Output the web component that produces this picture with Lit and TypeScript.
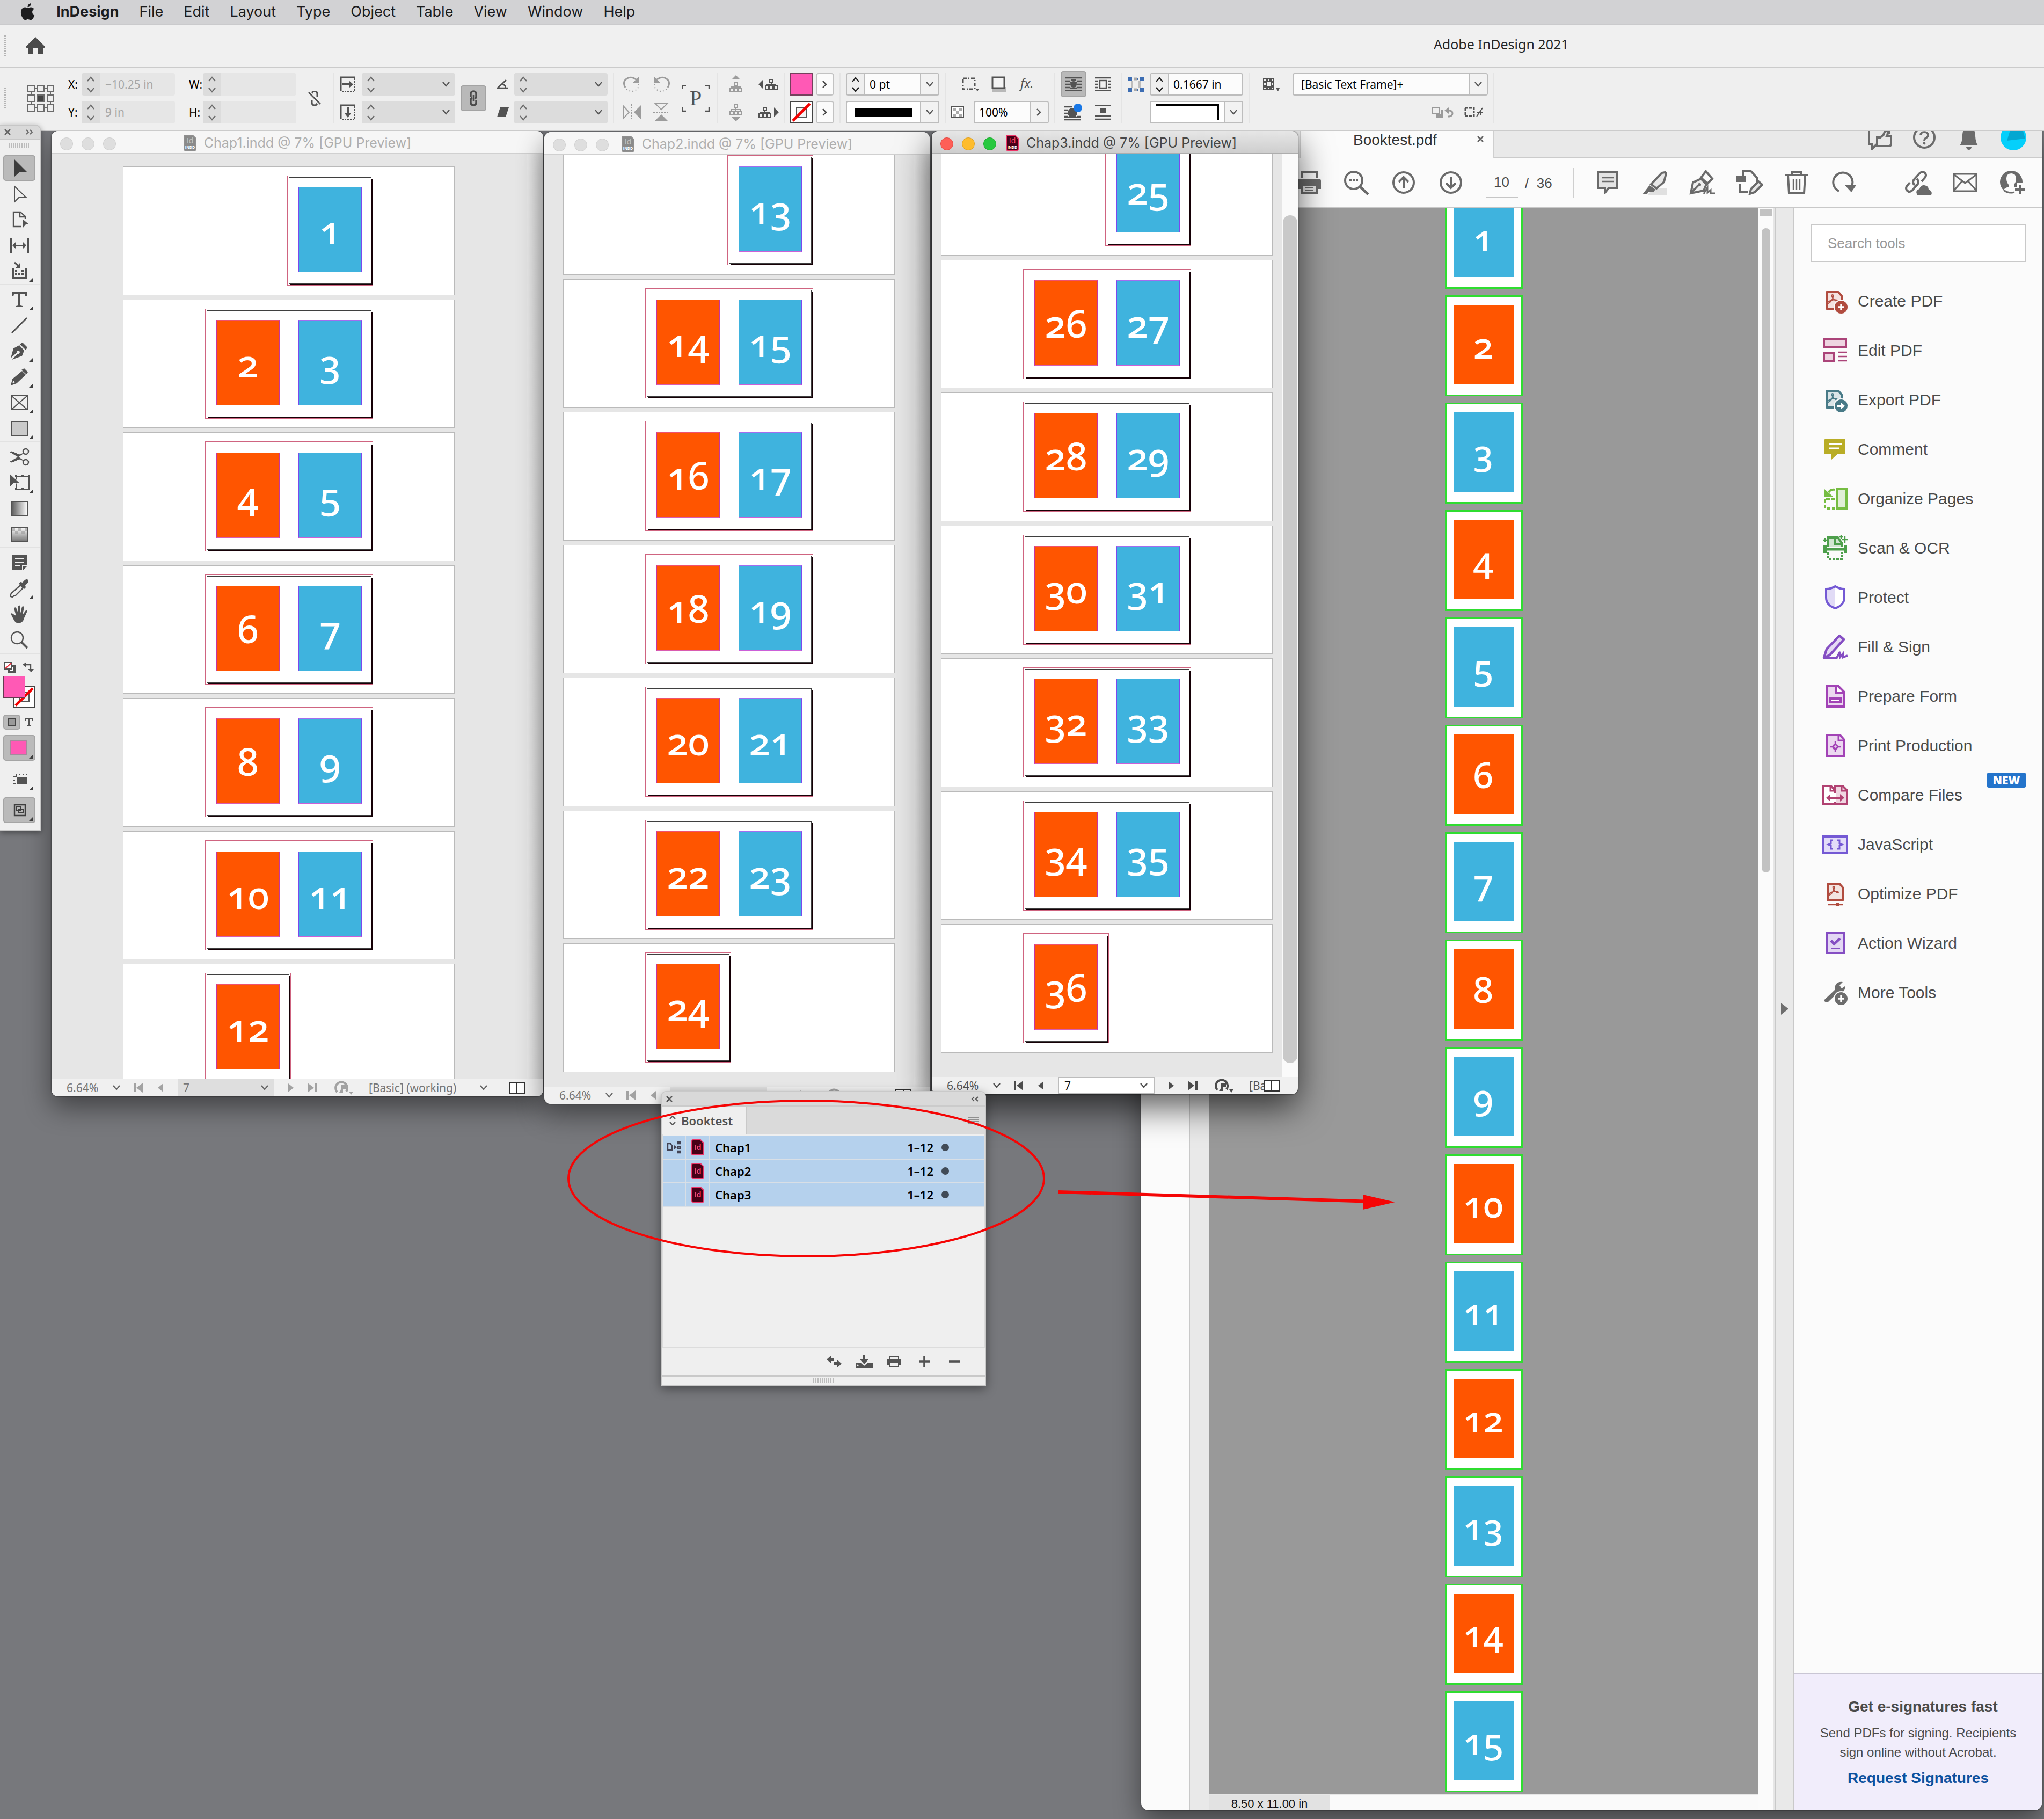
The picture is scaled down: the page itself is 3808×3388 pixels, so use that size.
import { LitElement, html, svg, css, nothing, SVGTemplateResult } from "lit";
import { customElement, property } from "lit/decorators.js";
import { classMap } from "lit/directives/class-map.js";
import { styleMap } from "lit/directives/style-map.js";

type Icon = [number, number, SVGTemplateResult];

const corner = svg`<path d="M56 34v8h-8z" fill="#3f3f3f"/>`;
const acrobatMark = (c: string) => svg`<path d="M19 12c3 0 1 6-1 9-2 4-6 8-8 7-1-2 4-5 8-6s10-1 10 1-5 0-8-4-3-7-1-7z" fill="none" stroke=${c} stroke-width="2"/>`;
const pdfPage = (c: string, f: string) => svg`
  <path d="M8 7h22l6 7v24H8z" fill=${f} stroke=${c} stroke-width="4" stroke-linejoin="round"/>${acrobatMark(c)}`;
const node = (x: number, y: number) => svg`<rect x=${x} y=${y} width="6" height="6" fill="none" stroke="currentColor" stroke-width="2"/>`;
const tree = (x: number, y: number) => svg`<g transform="translate(${x} ${y})">${node(9, 1)}${node(1, 13)}${node(9, 13)}${node(17, 13)}<path d="M12 7v6M4 13v-3h16v3" fill="none" stroke="currentColor" stroke-width="2"/></g>`;

const ICONS: Record<string, Icon> = {
  apple: [24, 24, svg`<path fill="currentColor" d="M12.152 6.896c-.948 0-2.415-1.078-3.96-1.04-2.04.027-3.91 1.183-4.961 3.014-2.117 3.675-.546 9.103 1.519 12.09 1.013 1.454 2.208 3.09 3.792 3.039 1.52-.065 2.09-.987 3.935-.987 1.831 0 2.35.987 3.96.948 1.637-.026 2.676-1.48 3.676-2.948 1.156-1.688 1.636-3.325 1.662-3.415-.039-.013-3.182-1.221-3.22-4.857-.026-3.04 2.48-4.494 2.597-4.559-1.429-2.09-3.623-2.324-4.39-2.376-2-.156-3.675 1.09-4.61 1.09zM15.53 3.83c.843-1.012 1.4-2.427 1.245-3.83-1.207.052-2.662.805-3.532 1.818-.78.896-1.454 2.338-1.273 3.714 1.338.104 2.715-.688 3.559-1.701"/>`],
  home: [36, 32, svg`<path fill="currentColor" d="M18 0l18 18-2 3h-2v11H22V20h-8v12H4V21H2l-2-3z"/>`],
  chevDown: [14, 10, svg`<path d="M1 1l6 7 6-7" fill="none" stroke="currentColor" stroke-width="2.4"/>`],
  chevUp: [14, 10, svg`<path d="M1 9l6-7 6 7" fill="none" stroke="currentColor" stroke-width="2.4"/>`],
  chevRight: [10, 14, svg`<path d="M1 1l6 6-6 6" fill="none" stroke="currentColor" stroke-width="2.4"/>`],
  refPoint: [50, 50, svg`<g fill="none" stroke="#6b6b6b" stroke-width="2">
    ${[1, 19, 37].map((y) => [1, 19, 37].map((x) => svg`<rect x=${x} y=${y} width="12" height="12" fill=${x === 19 && y === 19 ? "#444" : "none"}/>`))}
    <path d="M13 7h6M31 7h6M13 43h6M31 43h6M7 13v6M7 31v6M43 13v6M43 31v6"/></g>`],
  unlink: [26, 28, svg`<g fill="none" stroke="currentColor" stroke-width="3"><path d="M8 11V6q0-5 5-5t5 5v5M8 17v5q0 5 5 5t5-5v-5"/><path d="M2 3l22 22" stroke="#efefef" stroke-width="7"/><path d="M2 3l22 22" stroke-width="2.6"/></g>`],
  chain: [16, 30, svg`<g fill="none" stroke="#4a4a4a" stroke-width="3.4"><path d="M3 12V7q0-5 5-5t5 5v5q0 3-3 4M13 18v5q0 5-5 5t-5-5v-5q0-3 3-4"/><path d="M8 9v12" stroke-width="2.6"/></g>`],
  scaleX: [30, 30, svg`<path d="M28 2H2v26" fill="none" stroke="currentColor" stroke-width="3"/><path d="M28 4v25M4 28h24" fill="none" stroke="currentColor" stroke-width="2" stroke-dasharray="3 2"/><path d="M5 13h12V8l8 7-8 7v-5H5z" fill="currentColor"/>`],
  scaleY: [30, 30, svg`<path d="M28 2H2v26" fill="none" stroke="currentColor" stroke-width="3"/><path d="M28 4v25M4 28h24" fill="none" stroke="currentColor" stroke-width="2" stroke-dasharray="3 2"/><path d="M13 5h4v12h4l-6 8-6-8h4z" fill="currentColor"/>`],
  angle: [24, 18, svg`<path d="M18 1L2 16h20M11 8q6 3 6 8" fill="none" stroke="currentColor" stroke-width="2.6"/>`],
  shear: [24, 18, svg`<path d="M7 0h16l-6 18H1z" fill="currentColor"/>`],
  rotCw: [34, 32, svg`<path d="M5 22Q-1 12 7 6t18 1" fill="none" stroke="currentColor" stroke-width="3"/><path d="M31 1v13H18z" fill="currentColor"/><path d="M7 25q9 8 20 0 3-4 3-9" fill="none" stroke="currentColor" stroke-width="2" stroke-dasharray="2 4"/>`],
  rotCcw: [34, 32, svg`<g transform="matrix(-1 0 0 1 34 0)"><path d="M5 22Q-1 12 7 6t18 1" fill="none" stroke="currentColor" stroke-width="3"/><path d="M31 1v13H18z" fill="currentColor"/><path d="M7 25q9 8 20 0 3-4 3-9" fill="none" stroke="currentColor" stroke-width="2" stroke-dasharray="2 4"/></g>`],
  flipH: [34, 32, svg`<path d="M1 4v24l11-12z" fill="none" stroke="currentColor" stroke-width="2"/><path d="M34 3v26L21 16z" fill="currentColor"/><path d="M17 1v30" stroke="currentColor" stroke-width="2" stroke-dasharray="3 2"/>`],
  flipV: [32, 34, svg`<path d="M5 1h22L16 12z" fill="none" stroke="currentColor" stroke-width="2"/><path d="M3 34h26L16 21z" fill="currentColor"/><path d="M1 17h30" stroke="currentColor" stroke-width="2" stroke-dasharray="3 2"/>`],
  bracketP: [52, 50, svg`<path d="M1 8V1h7M44 1h7v7M51 42v7h-7M8 49H1v-7" fill="none" stroke="currentColor" stroke-width="2.4"/><text x="26" y="38" text-anchor="middle" font-family="Liberation Serif, serif" font-size="40" fill="currentColor">P</text>`],
  treeUp: [26, 34, svg`<path d="M13 0l8 8H5z" fill="currentColor"/>${tree(1, 12)}`],
  treeDown: [26, 34, svg`<path d="M13 34l8-8H5z" fill="currentColor"/>${tree(1, 2)}`],
  treeLeft: [38, 22, svg`<path d="M0 11l9-9v18z" fill="currentColor"/>${tree(12, 1)}`],
  treeRight: [38, 22, svg`<path d="M38 11l-9-9v18z" fill="currentColor"/>${tree(0, 1)}`],
  noneSwatch: [42, 42, svg`<rect x="1" y="1" width="40" height="40" fill="#fff" stroke="#444" stroke-width="2"/><rect x="12" y="12" width="18" height="18" fill="#f4f4f4" stroke="#555" stroke-width="2"/><path d="M5 37L37 5" stroke="#f30000" stroke-width="5"/>`],
  cornerOpt: [32, 26, svg`<path d="M2 2h22v20H2z" fill="none" stroke="currentColor" stroke-width="3" stroke-dasharray="7 3 2 3"/><path d="M25 21h7l-3 5z" fill="currentColor"/>`],
  dropShadow: [28, 30, svg`<rect x="2" y="20" width="26" height="10" fill="#b8b8b8"/><rect x="2" y="2" width="22" height="20" fill="#f4f4f4" stroke="currentColor" stroke-width="3"/>`],
  fx: [36, 34, svg`<text x="3" y="24" font-family="Noto Sans, sans-serif" font-style="italic" font-size="23" fill="currentColor">fx.</text>`],
  checker: [24, 22, svg`<rect x="1" y="1" width="22" height="20" fill="#fff" stroke="currentColor" stroke-width="2"/><path d="M3 3h6v5H3zM15 3h6v5h-6zM9 8h6v6H9zM3 14h6v6H3zM15 14h6v6h-6z" fill="#aaa"/>`],
  wrapNone: [30, 26, svg`<path d="M0 1h30M0 7h9M21 7h9M0 13h9M21 13h9M0 19h9M21 19h9M0 25h30M10 5h10M8 10h14M10 15h10M8 20h14" stroke="currentColor" stroke-width="2.6"/><circle cx="15" cy="13" r="6" fill="currentColor"/>`],
  wrapBox: [30, 26, svg`<path d="M0 1h30M0 7h6M24 7h6M0 13h6M24 13h6M0 19h6M24 19h6M0 25h30" stroke="currentColor" stroke-width="2.4"/><rect x="9" y="6" width="12" height="14" fill="none" stroke="currentColor" stroke-width="2.4"/>`],
  wrapShape: [34, 32, svg`<path d="M0 6h14M0 12h7M0 18h7M0 24h7M24 24h6M0 30h30M0 25h30" stroke="currentColor" stroke-width="2.4"/><circle cx="15" cy="17" r="9" fill="currentColor"/><circle cx="25" cy="8" r="8" fill="#1877e6"/>`],
  wrapJump: [30, 28, svg`<path d="M0 1h30M0 21h30M0 27h30" stroke="currentColor" stroke-width="2.4"/><path d="M9 6h12v10H9z" fill="currentColor"/>`],
  offset: [30, 28, svg`<path d="M0 0h8v8H0zM22 0h8v8h-8zM0 20h8v8H0zM22 20h8v8h-8z" fill="#3c6db3"/><path d="M11 4h8M11 24h8" stroke="#3c6db3" stroke-width="4"/><path d="M8 8v12M22 8v12" stroke="#bdbdbd" stroke-width="4"/><path d="M12 4h6M12 24h6" stroke="#a9a9a9" stroke-width="5"/>`],
  frame: [32, 26, svg`<path d="M2 2h5v5H2zM9 2h5v5H9zM16 2h5v5h-5zM2 10h5v5H2zM16 10h5v5h-5zM2 18h5v5H2zM9 18h5v5H9zM16 18h5v5h-5z" fill="none" stroke="currentColor" stroke-width="2"/><path d="M25 20h7l-3 6z" fill="currentColor"/>`],
  clearOver: [40, 20, svg`<path d="M1 1h13v12H1z" fill="none" stroke="#9a9a9a" stroke-width="2"/><path d="M9 14h7V5h5v15H7v-6" fill="#9a9a9a"/><path d="M27 7h5q6 0 6 5t-6 6h-3" fill="none" stroke="#9a9a9a" stroke-width="3"/><path d="M31 1v12l-8-6z" fill="#9a9a9a"/>`],
  breakLink: [36, 20, svg`<rect x="2" y="2" width="16" height="15" fill="none" stroke="currentColor" stroke-width="3" stroke-dasharray="5 2"/><path d="M34 2L23 18M23 10h12M30 5v10" stroke="currentColor" stroke-width="2"/>`],

  close: [12, 12, svg`<path d="M1 1l10 10M11 1L1 11" stroke="currentColor" stroke-width="2.6"/>`],
  dblRight: [14, 10, svg`<path d="M1 1l4 4-4 4M8 1l4 4-4 4" fill="none" stroke="currentColor" stroke-width="2"/>`],
  dblLeft: [14, 10, svg`<path d="M6 1L2 5l4 4M13 1L9 5l4 4" fill="none" stroke="currentColor" stroke-width="2"/>`],
  tSelect: [60, 44, svg`<path d="M20 5l24 24H31l-11 10z" fill="#3c3c3c"/>`],
  tDirect: [60, 44, svg`<path d="M21 8l21 20H30l-9 9z" fill="none" stroke="currentColor" stroke-width="2"/>`],
  tPage: [60, 44, svg`<path d="M41 20v-4l-9-8H19v27h15" fill="none" stroke="currentColor" stroke-width="2.4"/><path d="M31 8v9h10" fill="none" stroke="currentColor" stroke-width="2.4"/><path d="M36 21l12 10h-6l-6 7z" fill="currentColor"/>`],
  tGap: [60, 44, svg`<path d="M12 8h4v28h-4zM44 8h4v28h-4z" fill="currentColor"/><path d="M22 22h16" stroke="currentColor" stroke-width="2"/><path d="M17 22l7-7v14zM43 22l-7-7v14z" fill="currentColor"/>`],
  tContent: [60, 44, svg`<path d="M18 16v18h24V16" fill="none" stroke="currentColor" stroke-width="4"/><path d="M22 20h4v4h-4zM34 20h4v4h-4zM22 26h4v4h-4zM28 26h4v4h-4zM34 26h4v4h-4z" fill="currentColor"/><path d="M21 6l7 6" stroke="currentColor" stroke-width="3"/><path d="M32 6v10H23z" fill="currentColor"/>${corner}`],
  tType: [60, 44, svg`<path d="M16 8h28v8h-3l-1-4h-8v21l4 1v2H24v-2l4-1V12h-8l-1 4h-3z" fill="currentColor"/>${corner}`],
  tLine: [60, 44, svg`<path d="M16 36L44 8" stroke="currentColor" stroke-width="3"/>`],
  tPen: [60, 44, svg`<path d="M30 11l9 10-4 10-19 7 11-11a3 3 0 1 0-2-2L14 35l5-18z" fill="currentColor"/><path d="M31 9l5-3 9 9-3 5z" fill="currentColor"/>${corner}`],
  tPencil: [60, 44, svg`<path d="M14 38l3-12 18-15 7 7-17 16zm3-4l5-2-3-3z" fill="currentColor" fill-rule="evenodd"/><path d="M34 9l5-3 7 7-3 4z" fill="currentColor"/>${corner}`],
  tFrame: [60, 44, svg`<path d="M15 9h30v26H15zM15 9l30 26M45 9L15 35" fill="none" stroke="currentColor" stroke-width="2"/>${corner}`],
  tRect: [60, 44, svg`<path d="M15 9h30v26H15z" fill="#cacaca" stroke="currentColor" stroke-width="2"/>${corner}`],
  tScissors: [60, 44, svg`<g fill="none" stroke="currentColor" stroke-width="2.4"><circle cx="42" cy="12" r="5"/><circle cx="42" cy="32" r="5"/></g><path d="M38 15L28 22 13 13l3-1 14 6zM38 29l-10-7-15 9 3 1 14-6z" fill="currentColor" stroke="currentColor"/>`],
  tTransform: [60, 44, svg`<path d="M24 10h24v24H24z" fill="none" stroke="currentColor" stroke-width="2"/><path d="M22 8h4v4h-4zM34 8h4v4h-4zM46 8h4v4h-4zM46 20h4v4h-4zM34 32h4v4h-4zM22 32h4v4h-4zM46 32h4v4h-4z" fill="currentColor"/><path d="M12 5l19 18H20l-8 8z" fill="currentColor" stroke="#efefef" stroke-width="1"/>${corner}`],
  tGradient: [60, 44, svg`<defs><linearGradient id="g"><stop offset="0" stop-color="#555"/><stop offset="1" stop-color="#fff"/></linearGradient></defs><path d="M15 9h30v26H15z" fill="url(#g)" stroke="currentColor" stroke-width="2"/>`],
  tFeather: [60, 44, svg`<defs><linearGradient id="h" x2="0" y2="1"><stop offset="0" stop-color="#fff"/><stop offset="1" stop-color="#777"/></linearGradient></defs><path d="M15 9h30v26H15z" fill="url(#h)" stroke="currentColor" stroke-width="2"/><path d="M16 10h6v6h-6zM28 10h6v6h-6zM40 10h4v6h-4zM22 16h6v6h-6zM34 16h6v6h-6z" fill="#999" opacity=".6"/>`],
  tNote: [60, 44, svg`<path d="M16 8h28v19h-9v9H16z" fill="currentColor"/><path d="M22 15h16M22 21h16M22 27h9" stroke="#efefef" stroke-width="2"/><path d="M37 29h7l-7 7z" fill="currentColor"/>`],
  tDropper: [60, 44, svg`<path d="M32 16l5 5-14 14q-3 0-6 3l-3-1q-1-3 1-6z" fill="none" stroke="currentColor" stroke-width="2.4"/><path d="M29 13l3-3 4 1q7-9 10-5t-5 10l1 4-3 3z" fill="currentColor"/>${corner}`],
  tHand: [60, 44, svg`<path d="M14 21q2-2 5 1l5 3-4-14q2-3 4-1l4 10V7q2-3 4 0v13l3-12q3-2 4 1l-3 14 6-8q3-1 3 1l-6 13q-2 8-7 9h-7q-3-1-6-7z" fill="currentColor"/>`],
  tZoom: [60, 44, svg`<circle cx="26" cy="18" r="11" fill="none" stroke="currentColor" stroke-width="2.4"/><path d="M34 26l11 11" stroke="currentColor" stroke-width="4"/>`],
  defaults: [22, 20, svg`<rect x="8" y="8" width="11" height="10" fill="#fff" stroke="currentColor" stroke-width="4"/><rect x="1" y="1" width="13" height="12" fill="#fff" stroke="currentColor" stroke-width="2"/><path d="M2 12L13 2" stroke="#e23" stroke-width="2"/>`],
  swap: [22, 20, svg`<path d="M6 5h9v9" fill="none" stroke="currentColor" stroke-width="2.4"/><path d="M7 0v10L0 5zM10 13h11l-5 6z" fill="currentColor"/>`],
  fillBox: [16, 16, svg`<rect x="1" y="1" width="14" height="14" fill="#999" stroke="#444" stroke-width="2"/>`],
  smallT: [16, 16, svg`<path d="M0 0h16v5h-2V2h-4v12h2v2H4v-2h2V2H2v3H0z" fill="currentColor"/>`],
  pinkFill: [60, 44, svg`<rect x="14" y="9" width="30" height="26" fill="#ff59b5" stroke="#a58a9c" stroke-width="2"/>${corner}`],
  viewMode: [60, 44, svg`<path d="M26 18h18v13H26z" fill="currentColor"/><path d="M18 17h7v-6M31 11v3M37 11v3M43 11v3M18 24h4M18 30h6" fill="none" stroke="currentColor" stroke-width="2"/>${corner}`],
  screenMode: [60, 44, svg`<path d="M21 12h20v20H21z" fill="none" stroke="#3f3f3f" stroke-width="2.4"/><path d="M24 16h9v7h-9zM28 21h9v6h-9z" fill="none" stroke="#3f3f3f" stroke-width="2"/>${corner}`],

  first: [18, 18, svg`<path d="M0 1h4v16H0zM17 0v18L5 9z" fill="currentColor"/>`],
  prev: [10, 16, svg`<path d="M10 0v16L0 8z" fill="currentColor"/>`],
  next: [10, 16, svg`<path d="M0 0v16l10-8z" fill="currentColor"/>`],
  last: [18, 18, svg`<path d="M14 1h4v16h-4zM0 0v18l12-9z" fill="currentColor"/>`],
  preflight: [36, 26, svg`<path d="M5 21A11 11 0 1 1 22 20" fill="none" stroke="currentColor" stroke-width="4"/><path d="M12 8h9v8h-5v7H8q3-3 4-7z" fill="currentColor"/><path d="M27 20h8l-4 6z" fill="currentColor"/>`],
  columns: [30, 22, svg`<path d="M1 1h28v20H1zM15 1v20" fill="#fff" stroke="#333" stroke-width="2"/>`],
  stack: [26, 24, svg`<g fill="none" stroke="currentColor" stroke-width="2.4"><path d="M1 5h5l3 4v8H1zM20 2h4v3h-4zM20 11h4v3h-4zM20 19h4v3h-4z"/></g><path d="M13 8l5 4-5 4z" fill="currentColor"/>`],
  updown: [12, 18, svg`<path d="M1 6l5-5 5 5M1 12l5 5 5-5" fill="none" stroke="currentColor" stroke-width="2"/>`],
  menu: [20, 14, svg`<path d="M0 1h20M0 5h20M0 9h20M0 13h20" stroke="#777" stroke-width="1.6"/>`],
  sync: [28, 22, svg`<path d="M0 7l8-7v4h6v6H8v4zM28 15l-8 7v-4h-6v-6h6V8z" fill="currentColor"/>`],
  save: [32, 24, svg`<path d="M0 14h9l7 6 7-6h9v10H0zM14 0h4v8h6l-8 9-8-9h6z" fill="currentColor"/><circle cx="4" cy="19" r="1.6" fill="#efefef"/>`],
  print: [26, 22, svg`<path d="M5 6V1h16v5" fill="none" stroke="currentColor" stroke-width="2"/><path d="M0 7h26v10h-4v-4H4v4H0z" fill="currentColor"/><path d="M5 13h16v8H5z" fill="#efefef" stroke="currentColor" stroke-width="2"/>`],
  plus: [20, 20, svg`<path d="M10 0v20M0 10h20" stroke="currentColor" stroke-width="3.6"/>`],
  minus: [20, 20, svg`<path d="M0 10h20" stroke="currentColor" stroke-width="3.6"/>`],

  share: [46, 48, svg`<g fill="none" stroke="currentColor" stroke-width="4"><path d="M14 2H3v34h6v9l8-8"/><path d="M18 22v18h22q4 0 4-4V22h-8q4-8 0-12-4 2-6 9l-6 5h-6M40 4v14"/></g>`],
  help: [44, 44, svg`<circle cx="22" cy="22" r="19" fill="none" stroke="currentColor" stroke-width="4"/><path d="M15 18q0-6 7-6t7 6q0 3-4 5-3 2-3 5" fill="none" stroke="currentColor" stroke-width="3.6"/><circle cx="22" cy="33" r="2.4" fill="currentColor"/>`],
  bell: [34, 46, svg`<path d="M14 3q3-4 6 0v3q9 2 9 12 0 14 5 20H0q5-6 5-20Q5 8 14 6z" fill="currentColor"/><path d="M12 41h10q-1 5-5 5t-5-5z" fill="currentColor"/>`],
  avatar: [48, 48, svg`<circle cx="24" cy="24" r="24" fill="#05d0fb"/><path d="M20 4l22 8 4 14-34 4z" fill="#04a7d1"/>`],
  aPrint: [44, 44, svg`<path d="M8 13V3h28v10" fill="none" stroke="currentColor" stroke-width="4"/><path d="M4 15h36q4 0 4 4v15h-6V25H6v9H0V19q0-4 4-4z" fill="currentColor"/><path d="M8 26h28v15H8z" fill="#e4e4e4" stroke="currentColor" stroke-width="4"/><path d="M15 31h14M15 36h14" stroke="currentColor" stroke-width="2"/>`],
  aSearch: [48, 46, svg`<circle cx="19" cy="19" r="16" fill="none" stroke="currentColor" stroke-width="4"/><path d="M31 31l15 14" stroke="currentColor" stroke-width="5"/><path d="M11 17h4v4h-4zM17 17h4v4h-4zM23 17h4v4h-4z" fill="currentColor"/>`],
  aUp: [44, 44, svg`<circle cx="22" cy="22" r="19" fill="none" stroke="currentColor" stroke-width="4"/><path d="M22 33V13M13 21l9-9 9 9" fill="none" stroke="currentColor" stroke-width="4"/>`],
  aDown: [44, 44, svg`<circle cx="22" cy="22" r="19" fill="none" stroke="currentColor" stroke-width="4"/><path d="M22 11v20M13 23l9 9 9-9" fill="none" stroke="currentColor" stroke-width="4"/>`],
  aComment: [40, 44, svg`<path d="M2 3h36v29H22l-7 9v-9H2z" fill="#e4e4e4" stroke="currentColor" stroke-width="4"/><path d="M9 13h22M9 20h22" stroke="currentColor" stroke-width="2.6"/>`],
  aHighlight: [46, 46, svg`<path d="M11 44l11-10h24v12H11z" fill="#e0e0e0"/><path d="M42 4l2 2-4 16-14 12-10-8L36 5z" fill="#e8e8e8" stroke="currentColor" stroke-width="4"/><path d="M13 28l11 8-4 5H11l-3 4H0z" fill="currentColor"/>`],
  aSign: [48, 46, svg`<path d="M3 43l4-20 15-7 10 10-5 12zM3 43l14-15" fill="#ededed" stroke="currentColor" stroke-width="4"/><circle cx="19" cy="27" r="3" fill="currentColor"/><path d="M22 14L31 2l12 14-9 9z" fill="none" stroke="currentColor" stroke-width="4"/><path d="M27 44l7-12v10l6-5v6h8" fill="none" stroke="currentColor" stroke-width="3"/>`],
  aPages: [50, 46, svg`<path d="M14 11V2h14l11 12v10M8 26v15h14" fill="none" stroke="currentColor" stroke-width="4"/><path d="M0 10h18v12H0z" fill="currentColor"/><path d="M26 44l2-9 14-14 7 6-14 14z" fill="#e4e4e4" stroke="currentColor" stroke-width="4"/>`],
  aTrash: [44, 44, svg`<path d="M0 8h44M14 7V2h16v5M6 9l2 33h28l2-33" fill="none" stroke="currentColor" stroke-width="4"/><path d="M16 16v19M22 16v19M28 16v19" stroke="currentColor" stroke-width="2.4"/>`],
  aRotate: [46, 44, svg`<path d="M14 38a18 18 0 1 1 22-6" fill="none" stroke="currentColor" stroke-width="4"/><path d="M25 27h21L37 40z" fill="currentColor"/>`],
  aLink: [52, 46, svg`<g fill="none" stroke="currentColor" stroke-width="4"><path d="M20 28q-6-6 0-12L30 5q5-4 9 0t0 9l-6 7"/><path d="M24 16q6 6 0 12L15 38q-5 4-9 0t0-9l5-6"/></g><path d="M25 46q-5-8 4-11 2-8 9-7 8 1 8 8 8 3 5 10z" fill="currentColor"/>`],
  aMail: [46, 36, svg`<path d="M2 2h42v32H2zM2 3l21 16L44 3M2 33l15-17M44 33L29 16" fill="none" stroke="currentColor" stroke-width="3"/>`],
  aPerson: [48, 46, svg`<circle cx="22" cy="22" r="21" fill="currentColor"/><path d="M22 6q9 0 9 10 0 6-4 11v4q7 2 8 5l-6 8H15l-7-7q1-4 9-6v-4q-4-5-4-11 0-10 9-10z" fill="#fbfbfb"/><path d="M8 37q6 5 14 5 3 0 6-1" fill="none" stroke="currentColor" stroke-width="3"/><path d="M38 24v22M28 36h20" stroke="#fbfbfb" stroke-width="10"/><path d="M38 27v18M29 36h18" stroke="currentColor" stroke-width="4"/>`],
  tri: [14, 22, svg`<path d="M0 0l14 11L0 22z" fill="#6e6e6e"/>`],

  create: [48, 48, svg`${pdfPage("#b14c3f", "#f4e2df")}<circle cx="35" cy="35" r="14" fill="#fbfbfb"/><circle cx="35" cy="35" r="12" fill="#b14c3f"/><path d="M35 29v12M29 35h12" stroke="#fff" stroke-width="3.4"/>`],
  edit: [48, 48, svg`<g stroke="#ab4479" stroke-width="4" fill="#eed5e1"><path d="M3 3h41v15H3zM3 28h19v15H3z"/></g><path d="M29 27h17M29 35h17M29 43h17" stroke="#ab4479" stroke-width="2.4"/>`],
  export: [48, 48, svg`${pdfPage("#487a87", "#d9e4e7")}<circle cx="35" cy="35" r="14" fill="#fbfbfb"/><circle cx="35" cy="35" r="12" fill="#487a87"/><path d="M28 33h7v-4l7 6-7 6v-4h-7z" fill="#fff"/>`],
  comment: [48, 48, svg`<path d="M5 4h36q2 0 2 2v27H28L16 44V33H4V6z" fill="#b9ad26"/><path d="M12 14h24M12 22h19" stroke="#fff" stroke-width="3"/>`],
  organize: [48, 48, svg`<path d="M27 6h18v36H27z" fill="#e1efd6" stroke="#76bd42" stroke-width="4"/><path d="M24 24H5v18h19" fill="none" stroke="#76bd42" stroke-width="4" stroke-dasharray="7 3"/><path d="M23 7Q15 6 12 12" fill="none" stroke="#76bd42" stroke-width="4"/><path d="M4 6v14h16z" fill="#76bd42"/>`],
  scan: [48, 48, svg`<path d="M11 22V4h18l7 10v8" fill="#d2e6d1" stroke="#4d9f4b" stroke-width="4"/><path d="M24 5v11h12" fill="none" stroke="#4d9f4b" stroke-width="4"/><path d="M5 18v15M43 18v15" stroke="#4d9f4b" stroke-width="6"/><path d="M4 26h40" stroke="#4d9f4b" stroke-width="5"/><path d="M11 31v13h26V31" fill="none" stroke="#4d9f4b" stroke-width="4" stroke-dasharray="5 2"/><path d="M5 5v8M1 9h8M35 0v6M32 3h6M42 2v12M36 8h12" stroke="#4d9f4b" stroke-width="2.4"/>`],
  protect: [48, 48, svg`<path d="M24 3q8 5 17 5v16q0 14-17 20Q7 38 7 24V8q9 0 17-5z" fill="#fff"/><path d="M24 3v41Q7 38 7 24V8q9 0 17-5z" fill="#e1dbf6"/><path d="M24 3q8 5 17 5v16q0 14-17 20Q7 38 7 24V8q9 0 17-5z" fill="none" stroke="#7459d4" stroke-width="4"/>`],
  sign: [48, 48, svg`<path d="M3 44l5-16L32 3l8 7-26 29z" fill="#e6daf5" stroke="#854ec3" stroke-width="4.4" stroke-linejoin="round"/><path d="M2 44h25l6-11v10l6-7v7l8-3" fill="none" stroke="#854ec3" stroke-width="4"/>`],
  form: [48, 48, svg`<path d="M9 4h20l11 11v28H9z" fill="#ecd8f0" stroke="#a243b6" stroke-width="4"/><path d="M26 5v13h13" fill="#fff" stroke="#a243b6" stroke-width="4"/><path d="M15 28h19v7H15z" fill="#fff" stroke="#a243b6" stroke-width="4"/>`],
  production: [48, 48, svg`<path d="M9 4h24l7 8v31H9z" fill="#ecd8f0" stroke="#a243b6" stroke-width="4"/><path d="M30 5v9h9" fill="none" stroke="#a243b6" stroke-width="3"/><circle cx="24" cy="26" r="5.5" fill="#a243b6"/><path d="M24 16v20M14 26h20" stroke="#a243b6" stroke-width="2.4"/><path d="M24 23v6M21 26h6" stroke="#ecd8f0" stroke-width="1.4"/>`],
  compare: [48, 48, svg`<path d="M2 7h14l8 8v25H2z" fill="#fff" stroke="#b14272" stroke-width="4"/><path d="M24 7h14l8 8v25H24z" fill="#efd6e1" stroke="#b14272" stroke-width="4"/><path d="M15 8v8h8M36 8v8h9" fill="none" stroke="#b14272" stroke-width="3"/><path d="M22 20h4v16h-4z" fill="#fff"/><path d="M13 29h22" stroke="#b14272" stroke-width="4"/><path d="M7 29l8-7v14zM41 29l-8-7v14z" fill="#b14272"/>`],
  js: [48, 48, svg`<path d="M2 9h44v30H2z" fill="#e2dcf8" stroke="#7459d4" stroke-width="4"/><path d="M20 16h-4v6l-5 2 5 2v6h4M28 16h4v6l5 2-5 2v6h-4" fill="none" stroke="#7459d4" stroke-width="3"/>`],
  optimize: [48, 48, svg`<g transform="translate(2 -2)">${pdfPage("#b14c3f", "#f3e4e0")}</g><path d="M10 44h28" stroke="#b14c3f" stroke-width="2.4"/><path d="M25 41h6v6h-6z" fill="#b14c3f"/>`],
  wizard: [48, 48, svg`<path d="M9 4h31v38H9z" fill="#e3d7f4" stroke="#854ec3" stroke-width="4"/><path d="M16 19l6 6 11-10" fill="none" stroke="#854ec3" stroke-width="5"/><path d="M16 34h17" stroke="#854ec3" stroke-width="2"/>`],
  more: [48, 48, svg`<path d="M4 37l20-19q-2-9 5-13 5-2 9-1l-6 6 4 6 6-4q1 8-5 11-4 1-7 0L11 41q-4 2-7-1-1-1 0-3z" fill="#6c6c6c"/><circle cx="35" cy="35" r="14" fill="#fbfbfb"/><circle cx="35" cy="35" r="12" fill="#6c6c6c"/><path d="M35 29v12M29 35h12" stroke="#fff" stroke-width="3.4"/>`],
};

const icon = (name: string, scale = 1) => {
  const [w, h, body] = ICONS[name];
  return html`<svg class="icon" width=${w * scale} height=${h * scale} viewBox="0 0 ${w} ${h}" aria-hidden="true">${body}</svg>`;
};

const inddIcon = (active: boolean, caption = true) => {
  const edge = active ? "#ee3568" : "#8f8f8f";
  const fill = active ? "#470017" : "#8a8a8a";
  return html`<svg class="icon" width="24" height="30" viewBox="0 0 24 30" aria-hidden="true">
    <path d="M3 1h14l6 6v20q0 2-2 2H3q-2 0-2-2V3q0-2 2-2z" fill=${fill} stroke=${edge} stroke-width="2"/>
    <text x="12" y=${caption ? 16 : 20} text-anchor="middle" font-family="Open Sans, sans-serif" font-size="14" fill=${active ? "#ff4a78" : "#c4c4c4"}>Id</text>
    ${caption ? svg`<text x="12" y="26" text-anchor="middle" font-family="Open Sans, sans-serif" font-weight="700" font-size="7" fill="#fff">INDD</text>` : nothing}
  </svg>`;
};

const base = css`
  * { box-sizing: border-box; }
  .icon { display: block; flex: none; }
  button, input, select { font: inherit; color: inherit; margin: 0; padding: 0; border: 0; background: none; border-radius: 0; appearance: none; min-width: 0; outline: 0; }
  button { display: grid; place-items: center; }
  p, h2, ul { margin: 0; padding: 0; list-style: none; }
`;

@customElement("control-bar")
class ControlBar extends LitElement {
  static styles = [base, css`
    :host { display: flex; height: 118px; padding: 10px 0 12px 8px; background: #efefef; border-bottom: 2px solid #cbcbcb; font: 21px "Noto Sans", sans-serif; color: #000; }
    .group { display: grid; grid-template-rows: 42px 42px; row-gap: 10px; align-content: center; align-items: center; color: #535353; }
    .group + .group { border-left: 2px solid #e4e4e4; }
    .position { grid-template-columns: 43px 76px 25px 200px 26px 174px 68px; }
    .scale { grid-template-columns: 52px 174px 68px 42px 174px; padding-right: 10px; }
    .rotate { grid-template-columns: 54px 56px 72px; padding: 0 4px 0 6px; color: #9c9c9c; }
    .nav { grid-template-columns: 66px 56px; }
    .colour { grid-template-columns: 42px 34px; column-gap: 6px; padding: 0 10px; }
    .stroke { grid-template-columns: 174px; padding: 0 10px; }
    .effects { padding: 0 10px; width: 204px; }
    .wrap { grid-template-columns: 48px 62px; padding: 0 2px 0 10px; }
    .offset { grid-template-columns: 52px 174px; padding-right: 10px; }
    .style { grid-template-columns: 80px 364px; padding-right: 10px; border-right: 2px solid #e4e4e4; }
    .both { grid-row: 1 / 3; }
    .col2 { grid-column: 2; justify-self: start; }
    .col3 { grid-column: 3; }
    .col7 { grid-column: 7; }
    .mid { justify-self: center; }
    .dark { color: #535353; }
    .pale { color: #9c9c9c; }
    .handle { width: 4px; height: 38px; background: repeating-linear-gradient(#b4b4b4 0 2px, transparent 2px 4px); }
    label { color: #000; }
    .field { display: flex; height: 42px; width: 174px; background: #e6e6e6; border-radius: 4px; overflow: hidden; color: #a6a6a6; }
    .steps { width: 34px; flex: none; display: grid; grid-template-rows: 1fr 1fr; background: #dcdcdc; color: #6c6c6c; }
    .field input { flex: 1; padding-left: 10px; width: 20px; }
    .field.flat { background: #dcdcdc; color: #6c6c6c; }
    .field.live { background: #fcfcfc; border: 2px solid #bdbdbd; color: #000; }
    .live .steps { background: #efefef; color: #222; border-right: 2px solid #bdbdbd; }
    .live input { padding-left: 8px; }
    .pop { width: 34px; flex: none; color: #555; }
    .live .pop { background: #f2f2f2; border-left: 2px solid #bdbdbd; }
    .field.opacity { width: 140px; }
    .field.wide { width: 364px; }
    .wide input { padding-left: 14px; }
    .preview { flex: 1; display: grid; place-items: center; background: #fff; }
    .bar { width: 108px; height: 15px; background: #000; }
    .elbow { width: 118px; height: 30px; border: solid #000; border-width: 3px 3px 0 0; }
    .toggle { width: 48px; height: 48px; background: #b9b9b9; border: 2px solid #a3a3a3; border-radius: 5px; }
    .pink { height: 42px; width: 42px; background: #ff59b5; border: 2px solid #75405c; }
    .more { height: 42px; width: 34px; background: #fbfbfb; border: 2px solid #c2c2c2; border-radius: 5px; color: #444; }
    .line { display: flex; align-items: center; justify-content: space-between; }
    .line.pad { padding: 0 20px 0 20px; }
    .right { justify-self: end; gap: 20px; padding-right: 8px; }
  `];

  private steps(name: string) {
    return html`<span class="steps"><button aria-label="Increase ${name}">${icon("chevUp")}</button><button aria-label="Decrease ${name}">${icon("chevDown")}</button></span>`;
  }
  private num(id: string, name: string, value: string) {
    return html`<div class="field">${this.steps(name)}<input id=${id} .value=${value} /></div>`;
  }
  private flat(name: string) {
    return html`<div class="field flat">${this.steps(name)}<input aria-label=${name} /><button class="pop" aria-label="${name} presets">${icon("chevDown")}</button></div>`;
  }
  private btn(name: string, glyph: string, cls = "") {
    return html`<button class="mid ${cls}" aria-label=${name}>${icon(glyph)}</button>`;
  }

  render() {
    return html`
      <div class="group position">
        <span class="handle both"></span>
        <button class="both col2" aria-label="Reference point">${icon("refPoint")}</button>
        <label for="x">X:</label>${this.num("x", "X", "−10.25 in")}
        <label for="w">W:</label>${this.num("w", "W", "")}
        ${this.btn("Constrain proportions", "unlink", "both col7")}
        <label for="y">Y:</label>${this.num("y", "Y", "9 in")}
        <label for="h">H:</label>${this.num("h", "H", "")}
      </div>
      <div class="group scale">
        <span class="mid">${icon("scaleX")}</span>${this.flat("Scale X")}
        <button class="toggle both col3 mid" aria-label="Constrain scaling">${icon("chain")}</button>
        <span class="mid">${icon("angle")}</span>${this.flat("Rotation")}
        <span class="mid">${icon("scaleY")}</span>${this.flat("Scale Y")}
        <span class="mid">${icon("shear")}</span>${this.flat("Shear")}
      </div>
      <div class="group rotate">
        ${this.btn("Rotate clockwise", "rotCw")}${this.btn("Rotate counterclockwise", "rotCcw")}
        <span class="both col3 mid dark">${icon("bracketP")}</span>
        ${this.btn("Flip horizontal", "flipH")}${this.btn("Flip vertical", "flipV")}
      </div>
      <div class="group nav">
        ${this.btn("Select container", "treeUp", "pale")}${this.btn("Previous object", "treeLeft")}
        ${this.btn("Select content", "treeDown", "pale")}${this.btn("Next object", "treeRight")}
      </div>
      <div class="group colour">
        <button class="pink" aria-label="Fill"></button><button class="more" aria-label="Fill options">${icon("chevRight")}</button>
        <button aria-label="Stroke">${icon("noneSwatch")}</button><button class="more" aria-label="Stroke options">${icon("chevRight")}</button>
      </div>
      <div class="group stroke">
        <div class="field live">${this.steps("weight")}<input aria-label="Stroke weight" .value=${"0 pt"} /><button class="pop" aria-label="Weights">${icon("chevDown")}</button></div>
        <div class="field live"><span class="preview"><span class="bar"></span></span><button class="pop" aria-label="Stroke type">${icon("chevDown")}</button></div>
      </div>
      <div class="group effects">
        <div class="line pad">${this.btn("Corner options", "cornerOpt")}${this.btn("Drop shadow", "dropShadow")}${this.btn("Effects", "fx")}</div>
        <div class="line">${icon("checker")}<div class="field live opacity"><input aria-label="Opacity" .value=${"100%"} /><button class="pop" aria-label="Opacity slider">${icon("chevRight")}</button></div></div>
      </div>
      <div class="group wrap">
        <button class="toggle" aria-label="No text wrap">${icon("wrapNone")}</button>${this.btn("Wrap bounding box", "wrapBox")}
        ${this.btn("Wrap object shape", "wrapShape")}${this.btn("Jump object", "wrapJump")}
      </div>
      <div class="group offset">
        <span class="mid">${icon("offset")}</span>
        <div class="field live">${this.steps("offset")}<input aria-label="Wrap offset" .value=${"0.1667 in"} /></div>
        <span></span>
        <div class="field live"><span class="preview"><span class="elbow"></span></span><button class="pop" aria-label="Corner shape">${icon("chevDown")}</button></div>
      </div>
      <div class="group style">
        ${this.btn("Object style", "frame")}
        <div class="field live wide"><input aria-label="Object style name" .value=${"[Basic Text Frame]+"} /><button class="pop" aria-label="Object styles">${icon("chevDown")}</button></div>
        <span></span>
        <div class="line right">${this.btn("Clear overrides", "clearOver")}${this.btn("Break link to style", "breakLink")}</div>
      </div>`;
  }
}

const TOOLS: [string, string][][] = [
  [["tSelect", "Selection"], ["tDirect", "Direct selection"], ["tPage", "Page"], ["tGap", "Gap"], ["tContent", "Content collector"]],
  [["tType", "Type"], ["tLine", "Line"], ["tPen", "Pen"], ["tPencil", "Pencil"], ["tFrame", "Rectangle frame"], ["tRect", "Rectangle"]],
  [["tScissors", "Scissors"], ["tTransform", "Free transform"], ["tGradient", "Gradient swatch"], ["tFeather", "Gradient feather"]],
  [["tNote", "Note"], ["tDropper", "Eyedropper"], ["tHand", "Hand"], ["tZoom", "Zoom"]],
];

@customElement("tool-box")
class ToolBox extends LitElement {
  static styles = [base, css`
    :host { display: block; background: #efefef; border: solid #c6c6c6; border-width: 2px 2px 2px 0; border-top-right-radius: 10px; color: #535353; box-shadow: 0 4px 12px #0006; overflow: hidden; }
    .head { display: flex; justify-content: space-between; align-items: center; height: 26px; padding: 0 12px 0 8px; background: #d9d9d9; border-bottom: 2px solid #c9c9c9; color: #666; }
    .grip { width: 38px; height: 8px; margin: 7px 0 14px 16px; background: repeating-linear-gradient(90deg, #bcbcbc 0 2px, transparent 2px 4px); }
    .set { padding: 0 6px; border-bottom: 2px solid #e2e2e2; margin-bottom: 3px; }
    .tool { width: 60px; height: 48px; }
    .on { background: #bababa; border: 2px solid #a5a5a5; border-radius: 5px; }
    .tool.on .icon { margin: -2px; }
    .minis { display: flex; justify-content: space-between; padding: 6px 10px 0 8px; height: 38px; }
    .swatches { position: relative; height: 60px; margin: 0 6px; }
    .fill { position: absolute; left: 0; top: 0; width: 41px; height: 41px; background: #ff59b5; border: 1px solid #643a50; }
    .line { position: absolute; right: 2px; bottom: 0; }
    .pair { display: flex; gap: 8px; align-items: center; padding: 12px 6px 10px; }
    .pair button { width: 32px; height: 28px; }
    .pair .bare { width: 16px; }
    .modes { padding: 0 6px 12px; }
    .modes .gap { margin: 11px 0 9px; }
  `];
  render() {
    return html`
      <div class="head"><button aria-label="Close">${icon("close")}</button><button aria-label="Expand">${icon("dblRight")}</button></div>
      <div class="grip"></div>
      ${TOOLS.map((set, i) => html`<div class="set">${set.map(([glyph, name], j) => html`<button class=${classMap({ tool: true, on: i === 0 && j === 0 })} aria-label=${name}>${icon(glyph)}</button>`)}</div>`)}
      <div class="minis"><button aria-label="Default colours">${icon("defaults")}</button><button aria-label="Swap">${icon("swap")}</button></div>
      <div class="swatches"><span class="line">${icon("noneSwatch")}</span><span class="fill"></span></div>
      <div class="pair"><button class="on" aria-label="Format container">${icon("fillBox")}</button><button class="bare" aria-label="Format text">${icon("smallT")}</button></div>
      <div class="modes">
        <button class="tool on" aria-label="Apply colour">${icon("pinkFill")}</button>
        <button class="tool gap" aria-label="View options">${icon("viewMode")}</button>
        <button class="tool on" aria-label="Screen mode">${icon("screenMode")}</button>
      </div>`;
  }
}

@customElement("indd-window")
class InddWindow extends LitElement {
  @property() name = "";
  @property({ type: Boolean, reflect: true }) active = false;
  @property({ type: Number }) start = 1;
  @property({ type: Number }) scroll = 0;
  @property({ type: Number }) inset = 0;

  static styles = [base, css`
    :host { display: flex; flex-direction: column; background: #e6e6e6; border-radius: 12px; overflow: hidden; color: #767676; }
    .title { flex: none; position: relative; display: flex; justify-content: center; align-items: center; gap: 14px; height: 43px; padding-top: 2px; background: #f6f6f6; border-bottom: 2px solid #d0d0d0; font: 25px/38px Inter, sans-serif; color: #afafaf; }
    .lights { position: absolute; left: 16px; top: 12px; display: flex; gap: 16px; }
    .light { width: 24px; height: 24px; border-radius: 50%; background: #dedede; border: 1px solid #cfcfcf; }
    :host([active]) .title { background: linear-gradient(#e6e6e6, #cecece); border-color: #adadad; color: #474747; padding-left: 24px; }
    :host([active]) .red { background: #fe5f57; border-color: #e2463f; }
    :host([active]) .amber { background: #febc2e; border-color: #e0a11f; }
    :host([active]) .green { background: #28c840; border-color: #1dab2e; }
    .view { flex: 1; display: flex; justify-content: space-between; min-height: 0; overflow: hidden; }
    .board { display: flex; flex-direction: column; gap: 8px; width: 618px; height: 1725px; flex: none; }
    .sheet { flex: 1; background: #fff; border: 1px solid #bababa; padding: 19px 0 0 155px; display: flex; align-items: flex-start; }
    .spread { position: relative; display: flex; height: 199px; border: 1px solid #3f3f3f; box-shadow: 3px 3px 0 #150006; background: #fff; }
    .spread::after { content: ""; position: absolute; inset: -4px; border: 1px solid #cf6480; }
    .solo-right { margin-left: 153px; }
    .page { width: 152px; padding: 17px 17px 0; }
    .page + .page { border-left: 1px solid #3f3f3f; width: 153px; }
    .art { height: 159px; line-height: 159px; text-align: center; color: #fff; background: #ff5500; border: 1px solid #c535a0; border-color: #ee5170 #c535a0 #d95bb0; font-family: "Noto Sans", sans-serif; font-size: 71px; font-weight: 500; font-variant-numeric: oldstyle-nums; white-space: nowrap; display: flex; justify-content: center; align-items: center; }
    .odd { background: #3fb3de; border-color: #a36cf0 #7c48ee #cc60d8; }
    .track { width: 30px; background: linear-gradient(90deg, #eaeaea, #d4d4d4); padding: 114px 1px 26px 2px; display: flex; }
    :host([active]) .track { background: #fafafa; }
    .thumb { flex: 1; border-radius: 14px; }
    :host([active]) .thumb { background: #c9c9c9; }
    .status { flex: none; height: 32px; display: flex; align-items: center; padding-left: 28px; background: #f0f0f0; font: 21px/30px "Noto Sans", sans-serif; white-space: nowrap; overflow: hidden; position: relative; }
    .status button { flex: none; color: #a2a2a2; }
    :host([active]) .status { color: #555; }
    :host([active]) .status button { color: #4c4c4c; }
    .zoom { width: 86px; flex: none; }
    .go { width: 39px; justify-items: start; }
    .first { width: 45px; justify-items: start; }
    .prev { width: 37px; justify-items: start; }
    .status .dim { color: #666; }
    .jump { display: flex; width: 180px; height: 32px; flex: none; background: #dedede; align-items: center; }
    .jump input { flex: 1; padding-left: 10px; }
    .jump button { width: 36px; color: #666; }
    :host([active]) .jump { background: #fff; border: 2px solid #bcbcbc; color: #111; }
    .next { margin: 0 26px; }
    .flight { margin: 0 28px 0 32px; }
    .preset { flex: 1; overflow: hidden; display: flex; justify-content: space-between; min-width: 0; }
    .preset button { margin-right: 40px; }
    .split { flex: none; margin-right: 34px; background: #f0f0f0; }
  `];

  private page(n: number) {
    return html`<div class="page"><div class=${classMap({ art: true, odd: n % 2 === 1 })}>${n}</div></div>`;
  }
  render() {
    const s = this.start;
    const spreads = [[s], [s + 1, s + 2], [s + 3, s + 4], [s + 5, s + 6], [s + 7, s + 8], [s + 9, s + 10], [s + 11]];
    return html`
      <div class="title">
        <span class="lights"><span class="light red"></span><span class="light amber"></span><span class="light green"></span></span>
        ${inddIcon(this.active)}<span>${this.name} @ 7% [GPU Preview]</span>
      </div>
      <div class="view">
        <div class="board" style=${styleMap({ marginTop: `${this.scroll}px`, marginLeft: `${this.inset}px` })}>
          ${spreads.map((sp, i) => html`<div class="sheet"><div class=${classMap({ spread: true, "solo-right": i === 0 })}>${sp.map((n) => this.page(n))}</div></div>`)}
        </div>
        <div class="track"><span class="thumb"></span></div>
      </div>
      <div class="status">
        <span class="zoom">6.64%</span>
        <button class="go dim" aria-label="Zoom levels">${icon("chevDown")}</button>
        <button class="first" aria-label="First page">${icon("first")}</button>
        <button class="prev" aria-label="Previous page">${icon("prev")}</button>
        <span class="jump"><input aria-label="Page" .value=${"7"} /><button aria-label="Pages">${icon("chevDown")}</button></span>
        <button class="next" aria-label="Next page">${icon("next")}</button>
        <button aria-label="Last page">${icon("last")}</button>
        <button class="flight" aria-label="Preflight">${icon("preflight")}</button>
        <span class="preset">[Basic] (working)<button class="dim" aria-label="Preflight profile">${icon("chevDown")}</button></span>
        <button class="split" aria-label="Split view">${icon("columns")}</button>
      </div>`;
  }
}

@customElement("book-panel")
class BookPanel extends LitElement {
  static styles = [base, css`
    :host { display: flex; flex-direction: column; background: #efefef; border: 2px solid #c9c9c9; border-radius: 10px 10px 0 0; font: 600 22px/28px "Noto Sans", sans-serif; color: #535353; box-shadow: 0 6px 20px #0006; overflow: hidden; }
    .head { display: flex; justify-content: space-between; align-items: center; height: 25px; flex: none; padding: 0 12px 0 8px; background: #d9d9d9; }
    .tabs { display: flex; height: 54px; flex: none; background: #dadada; border-top: 2px solid #cbcbcb; justify-content: space-between; }
    .tab { display: flex; align-items: center; gap: 10px; width: 158px; padding-left: 14px; background: #efefef; border-right: 2px solid #c9c9c9; }
    .opts { padding-right: 11px; }
    table { border-collapse: collapse; width: 100%; margin-top: 2px; }
    .list { flex: 1; border: 2px solid #dcdcdc; border-width: 0 2px 2px; }
    td { height: 44px; padding: 0; background: #b5d1ed; border-bottom: 2px solid #d9dfe6; color: #000; vertical-align: middle; }
    .source { width: 42px; border-right: 2px solid #d9dfe6; color: #445; }
    .source .icon { margin-left: 8px; }
    .type { width: 44px; border-right: 2px solid #d9dfe6; }
    .type .icon { margin-left: 10px; }
    .name { padding-left: 10px; }
    .range { text-align: right; width: 100px; }
    .state { width: 94px; }
    .dot { display: block; width: 14px; height: 14px; border-radius: 50%; background: #414b57; margin-left: 15px; }
    .foot { display: flex; justify-content: flex-end; align-items: center; height: 50px; flex: none; padding-right: 29px; }
    .foot button { width: 56px; }
    .edge { height: 18px; flex: none; border-top: 3px solid #c9c9c9; display: grid; place-items: center; }
    .grip { width: 38px; height: 9px; background: repeating-linear-gradient(90deg, #bcbcbc 0 2px, transparent 2px 4px); }
  `];
  render() {
    return html`
      <div class="head"><button aria-label="Close">${icon("close")}</button><button aria-label="Collapse">${icon("dblLeft")}</button></div>
      <div class="tabs"><span class="tab">${icon("updown")}Booktest</span><button class="opts" aria-label="Panel menu">${icon("menu")}</button></div>
      <div class="list">
        <table aria-label="Book documents">
          ${["Chap1", "Chap2", "Chap3"].map((name, i) => html`<tr>
            <td class="source">${i === 0 ? icon("stack") : nothing}</td>
            <td class="type">${inddIcon(true, false)}</td>
            <td class="name">${name}</td>
            <td class="range">1–12</td>
            <td class="state"><span class="dot"></span></td>
          </tr>`)}
        </table>
      </div>
      <div class="foot">
        ${[["sync", "Synchronize"], ["save", "Save book"], ["print", "Print book"], ["plus", "Add document"], ["minus", "Remove document"]].map(([g, n]) => html`<button aria-label=${n}>${icon(g)}</button>`)}
      </div>
      <div class="edge"><span class="grip"></span></div>`;
  }
}

const PDF_TOOLS: [string, string][] = [
  ["create", "Create PDF"], ["edit", "Edit PDF"], ["export", "Export PDF"], ["comment", "Comment"], ["organize", "Organize Pages"],
  ["scan", "Scan & OCR"], ["protect", "Protect"], ["sign", "Fill & Sign"], ["form", "Prepare Form"], ["production", "Print Production"],
  ["compare", "Compare Files"], ["js", "JavaScript"], ["optimize", "Optimize PDF"], ["wizard", "Action Wizard"], ["more", "More Tools"],
];

@customElement("pdf-window")
class PdfWindow extends LitElement {
  static styles = [base, css`
    :host { display: flex; flex-direction: column; background: #fbfbfb; border-radius: 0 0 14px 14px; overflow: hidden; font-family: "Liberation Sans", Arial, sans-serif; color: #4b4b4b; }
    .tabs { flex: none; height: 50px; display: flex; justify-content: space-between; background: #e9e9e9; }
    .tab { margin-left: 296px; width: 361px; padding: 1px 17px 0 97px; display: flex; justify-content: space-between; align-items: flex-start; font-size: 28px; line-height: 32px; background: #fbfbfb; border: solid #cfcfcf; border-width: 0 2px; color: #333; }
    .tab button { margin-top: 8px; color: #666; }
    .account { flex: 1; display: flex; justify-content: flex-end; padding-right: 12px; border-bottom: 2px solid #cbcbcb; color: #6b6b6b; }
    .account button { width: 83px; height: 48px; margin-top: -12px; }
    .tools { flex: none; height: 94px; display: flex; align-items: center; padding: 0 11px 0 269px; border-bottom: 2px solid #c8c8c8; color: #6a6a6a; font-size: 26px; }
    .tools button { width: 88px; height: 60px; flex: none; }
    .tools input { width: 60px; margin-left: 21px; height: 56px; padding-left: 15px; border-bottom: 2px solid #c6c6c6; color: #4b4b4b; }
    .total { padding: 2px 0 0 13px; width: 102px; color: #4b4b4b; }
    .rule { width: 2px; height: 56px; background: #cfcfcf; margin-right: 19px; }
    .push { margin-left: auto; }
    .body { flex: 1; min-height: 0; display: grid; grid-template-columns: 89px 37px 1fr 30px 37px 461px; }
    .gutter { background: #e9e9e9; border: solid #c9c9c9; border-width: 0 0 0 2px; display: grid; place-items: center; }
    .gutter.right { border-width: 0 2px; align-content: start; padding-top: 1480px; }
    .doc { display: flex; flex-direction: column; min-height: 0; overflow: hidden; }
    .pages { flex: 1; min-height: 0; overflow: hidden; background: #999; display: flex; flex-direction: column; align-items: center; gap: 12px; }
    .pdf { flex: none; width: 145px; height: 188px; background: #fff; border: 3px solid #2fdd30; padding: 15px 14px 0 13px; }
    .pdf:first-child { margin-top: -38px; }
    .art { height: 148px; background: #ff5500; color: #fff; font-family: "Noto Sans", sans-serif; font-size: 67px; font-weight: 500; font-variant-numeric: oldstyle-nums; display: flex; align-items: center; justify-content: center; line-height: 148px; }
    .odd { background: #3fb3de; }
    .size { flex: none; height: 30px; border-top: 2px solid #e6e6e6; background: #fafafa; }
    .size span { display: block; width: 226px; height: 28px; background: #e2e2e2; text-align: center; font-size: 22px; line-height: 32px; color: #111; }
    .scroll { padding: 2px 2px 0; border-right: 2px solid #e6e6e6; }
    .cap { height: 12px; background: #c2c2c2; }
    .thumb { width: 16px; height: 1200px; border-radius: 8px; background: #c2c2c2; margin: 23px auto 0; }
    .side { display: flex; flex-direction: column; }
    .search { margin: 30px 30px 27px 31px; height: 70px; border: 2px solid #c9c9c9; background: #fff; padding-left: 29px; font-size: 26px; }
    .search::placeholder { color: #999; opacity: 1; }
    .entry { display: flex; align-items: center; gap: 18px; height: 92px; padding: 0 30px 0 52px; width: 100%; font-size: 30px; text-align: left; color: #4b4b4b; position: relative; }
    .new { position: absolute; right: 30px; top: 4px; width: 72px; height: 28px; border-radius: 3px; background: #2474cb; color: #fff; font: 800 21px/28px "Open Sans", sans-serif; text-align: center; }
    .promo { margin-top: auto; height: 256px; border-top: 2px solid #c9c6d4; background: #f1edfb; padding-top: 43px; text-align: center; }
    .promo h2 { font-size: 28px; line-height: 36px; padding-left: 18px; }
    .promo p { font-size: 24px; line-height: 36px; padding: 13px 40px 12px; }
    .promo a { font-size: 28px; line-height: 36px; font-weight: 700; color: #0c52a0; text-decoration: none; }
  `];
  private tool(glyph: string, name: string, cls = "") {
    return html`<button class=${cls} aria-label=${name}>${icon(glyph)}</button>`;
  }
  render() {
    return html`
      <div class="tabs">
        <div class="tab">Booktest.pdf<button aria-label="Close tab">${icon("close")}</button></div>
        <div class="account">${this.tool("share", "Feedback")}${this.tool("help", "Help")}${this.tool("bell", "Notifications")}${this.tool("avatar", "Account")}</div>
      </div>
      <div class="tools">
        ${this.tool("aPrint", "Print")}${this.tool("aSearch", "Search")}${this.tool("aUp", "Previous page")}${this.tool("aDown", "Next page")}
        <input aria-label="Page number" .value=${"10"} /><span class="total">/&nbsp; 36</span><span class="rule"></span>
        ${this.tool("aComment", "Comment")}${this.tool("aHighlight", "Highlight")}${this.tool("aSign", "Sign")}${this.tool("aPages", "Edit pages")}${this.tool("aTrash", "Delete")}${this.tool("aRotate", "Rotate")}
        ${this.tool("aLink", "Share link", "push")}${this.tool("aMail", "Email")}${this.tool("aPerson", "Add person")}
      </div>
      <div class="body">
        <span></span>
        <div class="gutter"></div>
        <div class="doc">
          <div class="pages">${Array.from({ length: 15 }, (_, i) => html`<div class="pdf"><div class=${classMap({ art: true, odd: i % 2 === 0 })}>${i + 1}</div></div>`)}</div>
          <div class="size"><span>8.50 x 11.00 in</span></div>
        </div>
        <div class="scroll"><div class="cap"></div><div class="thumb"></div></div>
        <button class="gutter right" aria-label="Collapse tools">${icon("tri")}</button>
        <div class="side">
          <input class="search" aria-label="Search tools" placeholder="Search tools" />
          ${PDF_TOOLS.map(([g, n]) => html`<button class="entry">${icon(g)}<span>${n}</span>${g === "compare" ? html`<span class="new">NEW</span>` : nothing}</button>`)}
          <div class="promo"><h2>Get e-signatures fast</h2><p>Send PDFs for signing. Recipients sign online without Acrobat.</p><a href="#">Request Signatures</a></div>
        </div>
      </div>`;
  }
}

@customElement("app-root")
class AppRoot extends LitElement {
  static styles = [base, css`
    :host { display: flex; flex-direction: column; min-height: 100vh; background: #77787c; }
    .menubar { height: 46px; flex: none; display: flex; align-items: center; gap: 38px; padding: 0 0 1px 36px; background: #d2d2d4; border-bottom: 2px solid #cacacc; font: 27px/34px Inter, sans-serif; color: #1d1d1f; }
    .app { font-weight: 700; }
    .homebar { height: 80px; flex: none; display: flex; align-items: center; background: #f0f0f0; border-bottom: 2px solid #cbcbcb; color: #4b4b4b; padding-left: 8px; }
    .handle { width: 4px; height: 38px; margin-right: 36px; background: repeating-linear-gradient(#b4b4b4 0 2px, transparent 2px 4px); }
    .before { flex: 745; }
    .after { flex: 255; }
    .caption { font: 25px/36px "Noto Sans", sans-serif; color: #262626; padding-bottom: 6px; }
    .work { flex: 1; position: relative; }
    .desk { position: absolute; inset: 0; overflow: hidden; }
    .win { position: absolute; box-shadow: 0 20px 50px #00000073, 0 0 3px #0009; }
    .one { left: 96px; top: 0; width: 916px; height: 1798px; }
    .two { left: 1014px; top: 2px; width: 718px; height: 1810px; }
    .three { left: 1736px; top: 0; width: 682px; height: 1794px; box-shadow: 0 24px 64px #000000a6, 0 0 3px #000c; }
    .acrobat { left: 2126px; right: 4px; top: 0; bottom: 16px; }
    .book { position: absolute; left: 1231px; top: 1788px; width: 606px; height: 549px; }
    .toolbox { position: absolute; left: 0; top: -12px; width: 76px; }
    .marks { position: absolute; left: 1050px; top: 1790px; }
  `];
  render() {
    return html`
      <nav class="menubar">
        <button aria-label="Apple menu">${icon("apple", 1.3)}</button>
        ${["InDesign", "File", "Edit", "Layout", "Type", "Object", "Table", "View", "Window", "Help"].map((m, i) => html`<button class=${i ? "" : "app"}>${m}</button>`)}
      </nav>
      <div class="homebar"><span class="handle"></span><button aria-label="Home">${icon("home")}</button><span class="before"></span><span class="caption">Adobe InDesign 2021</span><span class="after"></span></div>
      <control-bar></control-bar>
      <main class="work">
        <div class="desk">
          <pdf-window class="win acrobat"></pdf-window>
          <indd-window class="win one" name="Chap1.indd" .start=${1} .scroll=${23} .inset=${133}></indd-window>
          <indd-window class="win two" name="Chap2.indd" .start=${13} .scroll=${-17} .inset=${35}></indd-window>
          <indd-window class="win three" name="Chap3.indd" active .start=${25} .scroll=${-51} .inset=${17}></indd-window>
          <book-panel class="book"></book-panel>
          <svg class="marks" width="1560" height="320" viewBox="0 0 1560 320" aria-hidden="true">
            <ellipse cx="452" cy="161" rx="443" ry="145" fill="none" stroke="#f50505" stroke-width="4"/>
            <path d="M922 186l590 18" stroke="#f50505" stroke-width="6"/>
            <path d="M1549 205l-60-14v28z" fill="#f50505"/>
          </svg>
        </div>
        <tool-box class="toolbox"></tool-box>
      </main>`;
  }
}
